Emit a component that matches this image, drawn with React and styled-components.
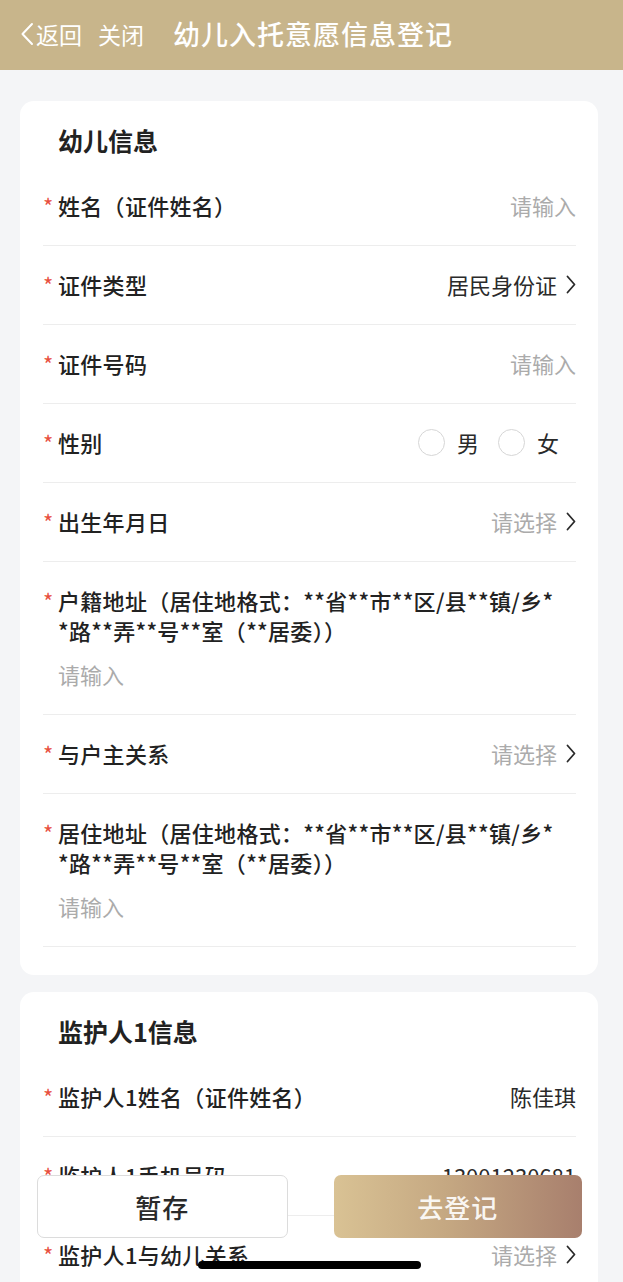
import React from "react";
import styled, { createGlobalStyle } from "styled-components";

const GlobalStyle = createGlobalStyle`
  html, body {
    margin: 0;
    padding: 0;
    background: #f4f5f7;
  }
  body {
    font-family: "Noto Sans CJK SC", "Noto Sans", sans-serif;
    -webkit-font-smoothing: antialiased;
  }
  * { box-sizing: border-box; }
`;

const Page = styled.div`
  position: relative;
  width: 623px;
  height: 1282px;
  overflow: hidden;
  background: #f4f5f7;
`;

const NavBar = styled.div`
  height: 70px;
  background: #c8b58b;
  display: flex;
  align-items: center;
  padding: 0 0 3px 20px;
  color: #fff;
`;

const NavLink = styled.span`
  display: flex;
  align-items: center;
  font-size: 23px;
  line-height: 30px;
  margin-right: ${(p) => p.$gap || 0}px;
`;

const NavTitle = styled.span`
  font-size: 27px;
  font-weight: 500;
  line-height: 34px;
  letter-spacing: 1px;
`;

const Content = styled.div`
  padding: 31px 25px 0 20px;
  display: flex;
  flex-direction: column;
  gap: 17px;
`;

const Card = styled.div`
  background: #fff;
  border-radius: 14px;
  padding: 24px 22px 28px 23px;
`;

const CardTitle = styled.div`
  font-size: 25px;
  font-weight: 700;
  line-height: 30px;
  color: #222;
  padding: 0 0 12px 15px;
`;

const Row = styled.div`
  display: flex;
  align-items: flex-start;
  padding: 23px 0 25px;
  border-bottom: 1px solid #ededed;
`;

const Star = styled.span`
  width: 15px;
  flex: none;
  color: #e8503f;
  font-size: 22px;
  line-height: 30px;
`;

const Label = styled.div`
  flex: 1;
  min-width: 0;
  font-size: 22px;
  font-weight: 500;
  line-height: 30px;
  letter-spacing: 0.3px;
  color: #222;
`;

const Value = styled.div`
  display: flex;
  align-items: center;
  gap: 9px;
  font-size: 22px;
  line-height: 30px;
  color: ${(p) => (p.$muted ? "#ababab" : "#2a2a2a")};
  white-space: nowrap;
`;

const Block = styled.div`
  flex: 1;
  min-width: 0;
  display: flex;
  flex-direction: column;
  gap: 14px;
`;

const Placeholder = styled.div`
  font-size: 22px;
  line-height: 30px;
  color: #ababab;
`;

const Radios = styled.div`
  display: flex;
  align-items: center;
  gap: 19px;
  margin-right: 17px;
`;

const RadioItem = styled.label`
  display: flex;
  align-items: center;
  gap: 12px;
  font-size: 22px;
  line-height: 30px;
  color: #2a2a2a;
`;

const Circle = styled.span`
  width: 27px;
  height: 27px;
  border-radius: 50%;
  border: 1.5px solid #d6d6d6;
`;

const Footer = styled.div`
  position: absolute;
  left: 37px;
  right: 41px;
  bottom: 44px;
  display: flex;
  gap: 46px;
`;

const Button = styled.div`
  flex: 1;
  height: 63px;
  border-radius: 7px;
  display: flex;
  align-items: center;
  justify-content: center;
  font-size: 26px;
  font-weight: 500;
  letter-spacing: 1px;
  color: ${(p) => (p.$primary ? "rgba(255,255,255,0.92)" : "#2a2a2a")};
  background: ${(p) =>
    p.$primary ? "linear-gradient(90deg, #d9c294 0%, #c5a882 45%, #a87f6d 100%)" : "#fff"};
  border: ${(p) => (p.$primary ? "none" : "1.5px solid #dcdcdc")};
`;

const HomeBar = styled.div`
  position: absolute;
  left: 198px;
  bottom: 13px;
  width: 223px;
  height: 8px;
  border-radius: 4px;
  background: #000;
`;

const Chevron = ({ color = "#2a2a2a" }) => (
  <svg width="10" height="19" viewBox="0 0 10 19" fill="none">
    <polyline points="1.5,1.5 8.5,9.5 1.5,17.5" stroke={color} strokeWidth="1.8" strokeLinecap="round" strokeLinejoin="round" />
  </svg>
);

const BackChevron = () => (
  <svg width="14" height="24" viewBox="0 0 14 24" fill="none" style={{ marginRight: 2 }}>
    <polyline points="12,2 2.5,12 12,22" stroke="#fff" strokeWidth="2" strokeLinecap="round" strokeLinejoin="round" />
  </svg>
);

const FieldRow = ({ label, value, muted, arrow }) => (
  <Row>
    <Star>*</Star>
    <Label>{label}</Label>
    <Value $muted={muted}>
      {value}
      {arrow && <Chevron />}
    </Value>
  </Row>
);

// the hint wraps after "乡*" in the app, keep the same break
const AddressRow = ({ name }) => (
  <Row>
    <Star>*</Star>
    <Block>
      <Label>
        {name}（居住地格式：**省**市**区/县**镇/乡*
        <br />
        *路**弄**号**室（**居委））
      </Label>
      <Placeholder>请输入</Placeholder>
    </Block>
  </Row>
);

export default function App() {
  return (
    <Page>
      <GlobalStyle />
      <NavBar>
        <NavLink $gap={16}>
          <BackChevron />
          返回
        </NavLink>
        <NavLink $gap={29}>关闭</NavLink>
        <NavTitle>幼儿入托意愿信息登记</NavTitle>
      </NavBar>

      <Content>
        <Card>
          <CardTitle>幼儿信息</CardTitle>
          <FieldRow label="姓名（证件姓名）" value="请输入" muted />
          <FieldRow label="证件类型" value="居民身份证" arrow />
          <FieldRow label="证件号码" value="请输入" muted />
          <Row>
            <Star>*</Star>
            <Label>性别</Label>
            <Radios>
              <RadioItem>
                <Circle />男
              </RadioItem>
              <RadioItem>
                <Circle />女
              </RadioItem>
            </Radios>
          </Row>
          <FieldRow label="出生年月日" value="请选择" muted arrow />
          <AddressRow name="户籍地址" />
          <FieldRow label="与户主关系" value="请选择" muted arrow />
          <AddressRow name="居住地址" />
        </Card>

        <Card>
          <CardTitle>监护人1信息</CardTitle>
          <FieldRow label="监护人1姓名（证件姓名）" value="陈佳琪" />
          <FieldRow label="监护人1手机号码" value="13001230681" />
          <FieldRow label="监护人1与幼儿关系" value="请选择" muted arrow />
          <FieldRow label="监护人1证件类型" value="居民身份证" arrow />
        </Card>
      </Content>

      <Footer>
        <Button>暂存</Button>
        <Button $primary>去登记</Button>
      </Footer>
      <HomeBar />
    </Page>
  );
}
